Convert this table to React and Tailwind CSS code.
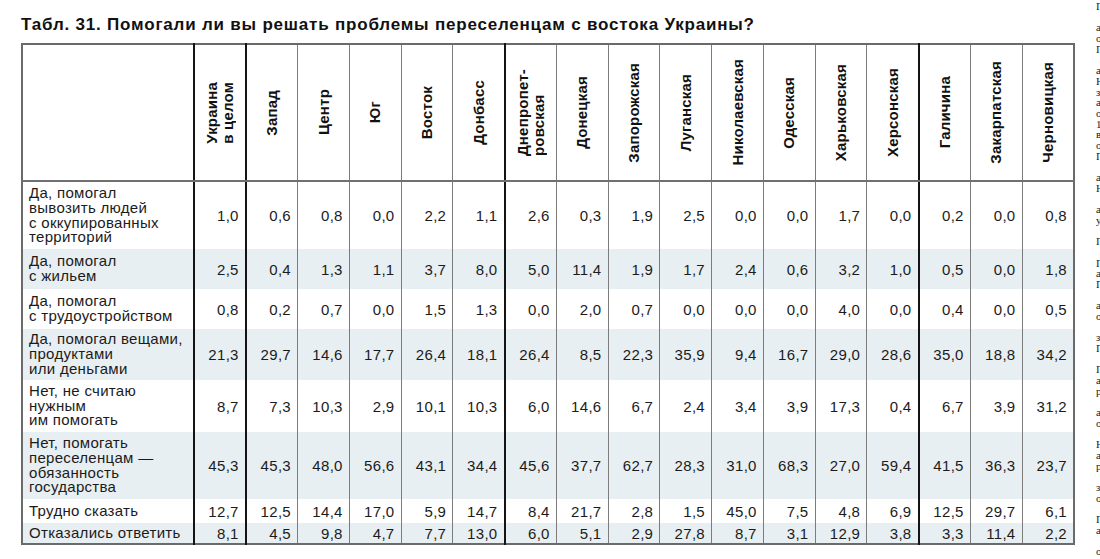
import React from "react";

const cols = [
  "Украина\nв целом",
  "Запад",
  "Центр",
  "Юг",
  "Восток",
  "Донбасс",
  "Днепропет-\nровская",
  "Донецкая",
  "Запорожская",
  "Луганская",
  "Николаевская",
  "Одесская",
  "Харьковская",
  "Херсонская",
  "Галичина",
  "Закарпатская",
  "Черновицкая",
];

const rows = [
  {
    label: "Да, помогал\nвывозить людей\nс оккупированных\nтерриторий",
    h: "h-[68px]",
    shade: false,
    v: "1,0 0,6 0,8 0,0 2,2 1,1 2,6 0,3 1,9 2,5 0,0 0,0 1,7 0,0 0,2 0,0 0,8",
  },
  {
    label: "Да, помогал\nс жильем",
    h: "h-[40px]",
    shade: true,
    v: "2,5 0,4 1,3 1,1 3,7 8,0 5,0 11,4 1,9 1,7 2,4 0,6 3,2 1,0 0,5 0,0 1,8",
  },
  {
    label: "Да, помогал\nс трудоустройством",
    h: "h-[40px]",
    shade: false,
    v: "0,8 0,2 0,7 0,0 1,5 1,3 0,0 2,0 0,7 0,0 0,0 0,0 4,0 0,0 0,4 0,0 0,5",
  },
  {
    label: "Да, помогал вещами,\nпродуктами\nили деньгами",
    h: "h-[51px]",
    shade: true,
    v: "21,3 29,7 14,6 17,7 26,4 18,1 26,4 8,5 22,3 35,9 9,4 16,7 29,0 28,6 35,0 18,8 34,2",
  },
  {
    label: "Нет, не считаю\nнужным\nим помогать",
    h: "h-[52px]",
    shade: false,
    v: "8,7 7,3 10,3 2,9 10,1 10,3 6,0 14,6 6,7 2,4 3,4 3,9 17,3 0,4 6,7 3,9 31,2",
  },
  {
    label: "Нет, помогать\nпереселенцам —\nобязанность\nгосударства",
    h: "h-[67px]",
    shade: true,
    v: "45,3 45,3 48,0 56,6 43,1 34,4 45,6 37,7 62,7 28,3 31,0 68,3 27,0 59,4 41,5 36,3 23,7",
  },
  {
    label: "Трудно сказать",
    h: "h-[24px]",
    shade: false,
    v: "12,7 12,5 14,4 17,0 5,9 14,7 8,4 21,7 2,8 1,5 45,0 7,5 4,8 6,9 12,5 29,7 6,1",
  },
  {
    label: "Отказались ответить",
    h: "h-[21px]",
    shade: true,
    v: "8,1 4,5 9,8 4,7 7,7 13,0 6,0 5,1 2,9 27,8 8,7 3,1 12,9 3,8 3,3 11,4 2,2",
  },
];

const thick = new Set([0, 1, 6, 14]);

function leftBorder(i) {
  return thick.has(i)
    ? "border-l-2 border-l-[#141414]"
    : "border-l border-l-[#7c7c7c]";
}

const sideLines = [
  "Пере", "", "а ст", "о вр", "Пол", "", "а за", "Ни", "з ни", "а по", "о кт", "1 ра", "в ци",
  "о бы", "П ст", "", "а те", "Н во", "", "а ни", "у мо", "", "Па", "", "П сл", "а мы",
  "П ко", "", "а се", "о во", "", "з за", "П го", "", "П ва", "а ли", "р пр", "", "а ле",
  "о на", "", "Н кр", "а от", "р ди", "", "з ле", "о то", "", "П не", "а ва", "", "о мн",
];

export default function App() {
  return (
    <div className="w-[1100px] h-[559px] overflow-hidden bg-white flex font-['Liberation_Sans',Arial,sans-serif] text-[#1b1b1b]">
      <div className="pl-[21px] shrink-0">
        <div className="h-[43px] pt-[15px] text-[17px] leading-[20px] font-bold tracking-[0.8px] text-[#111] whitespace-nowrap">
          Табл. 31. Помогали ли вы решать проблемы переселенцам с востока Украины?
        </div>
        <table className="table-fixed border-collapse w-[1054px] border-2 border-[#6a6a6a]">
          <colgroup>
            <col className="w-[172px]" />
            {cols.map((c, i) => (
              <col key={i} />
            ))}
          </colgroup>
          <thead>
            <tr>
              <th className="h-[135px] p-0 border-b-2 border-b-[#707070]"></th>
              {cols.map((c, i) => (
                <th
                  key={i}
                  className={`h-[135px] p-0 border-b-2 border-b-[#707070] ${leftBorder(i)}`}
                >
                  <div className="flex items-center justify-center h-[135px]">
                    <span className="[writing-mode:vertical-rl] rotate-180 whitespace-pre text-left font-bold text-[15px] leading-[15.5px] tracking-[0.2px] text-[#111]">
                      {c}
                    </span>
                  </div>
                </th>
              ))}
            </tr>
          </thead>
          <tbody>
            {rows.map((r, ri) => (
              <tr key={ri} className={`${r.h} ${r.shade ? "bg-[#e8eff2]" : "bg-white"}`}>
                <td className="p-0 pl-[6px] align-middle whitespace-pre-line text-left text-[15px] leading-[14.7px] tracking-[0.3px]">
                  {r.label}
                </td>
                {r.v.split(" ").map((n, i) => (
                  <td
                    key={i}
                    className={`p-0 pr-[6px] align-middle text-right text-[15px] leading-[15px] tracking-[0.3px] ${leftBorder(i)}`}
                  >
                    {n}
                  </td>
                ))}
              </tr>
            ))}
          </tbody>
        </table>
      </div>
      <div className="ml-[21px] shrink-0 w-[120px] pt-[1px] font-['Liberation_Serif','Times_New_Roman',serif] text-[11px] leading-[10.7px] text-[#222]">
        {sideLines.map((l, i) => (
          <div key={i} className="h-[10.7px] whitespace-nowrap">
            {l || "\u00a0"}
          </div>
        ))}
      </div>
    </div>
  );
}
